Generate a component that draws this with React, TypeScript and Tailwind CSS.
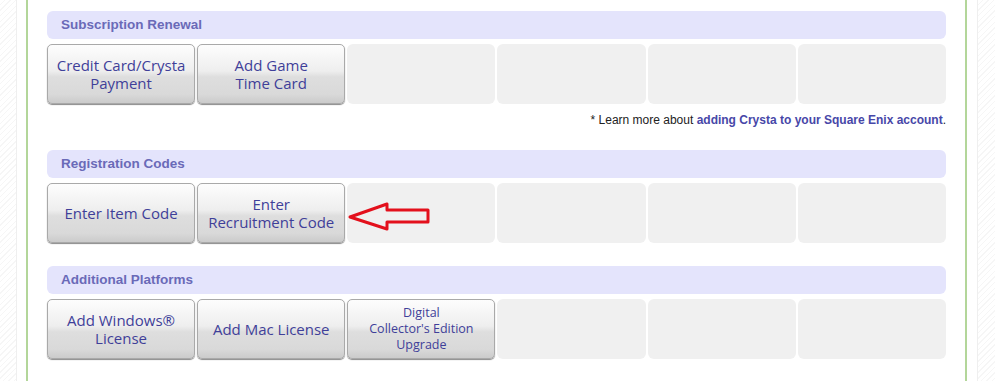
import { Fragment } from "react";

type Section = {
  title: string;
  buttons: Array<{ lines: string[]; small?: boolean }>;
  note?: boolean;
  arrow?: boolean;
};

const sections: Section[] = [
  {
    title: "Subscription Renewal",
    buttons: [
      { lines: ["Credit Card/Crysta", "Payment"] },
      { lines: ["Add Game", "Time Card"] },
    ],
    note: true,
  },
  {
    title: "Registration Codes",
    buttons: [
      { lines: ["Enter Item Code"] },
      { lines: ["Enter", "Recruitment Code"] },
    ],
    arrow: true,
  },
  {
    title: "Additional Platforms",
    buttons: [
      { lines: ["Add Windows®", "License"] },
      { lines: ["Add Mac License"] },
      { lines: ["Digital", "Collector's Edition", "Upgrade"], small: true },
    ],
  },
];

const stripes =
  "bg-[repeating-linear-gradient(135deg,#ffffff_0px,#ffffff_3px,#f6f6f6_3px,#f6f6f6_4px)]";

function RedArrow() {
  return (
    <svg
      className="absolute left-[300px] top-[17px]"
      width="86"
      height="34"
      viewBox="0 0 86 34"
    >
      <polygon
        points="3,17 40,4 40,10 81,10 81,22 40,22 40,29"
        fill="none"
        stroke="#e3101c"
        strokeWidth="3"
        strokeLinejoin="round"
      />
    </svg>
  );
}

export default function App() {
  return (
    <div className="flex h-[381px] w-[995px] bg-white font-['Liberation_Sans',Arial,sans-serif]">
      <div className={`w-[17px] border-r border-[#efefef] ${stripes}`} />
      <div className="w-[9px]" />
      <div className="flex w-[942px] flex-col border-x-2 border-[#b3d69a] px-[19px] pt-[11px]">
        {sections.map((s, si) => (
          <Fragment key={si}>
            <div className="flex h-[28px] shrink-0 items-center rounded-[6px] bg-[#e4e4fc] pl-[14px] text-[13.5px] font-bold text-[#6a6ab8]">
              {s.title}
            </div>
            <div className="relative mt-[5px] grid shrink-0 grid-cols-6 gap-[2px]">
              {Array.from({ length: 6 }).map((_, i) => {
                const b = s.buttons[i];
                if (!b)
                  return (
                    <div key={i} className="h-[60px] rounded-[6px] bg-[#f0f0f0]" />
                  );
                return (
                  <div
                    key={i}
                    className={`flex h-[60px] flex-col items-center justify-center rounded-[5px] border border-[#a9a9a9] bg-[linear-gradient(#fdfdfd_0%,#eeeeee_45%,#dedede_55%,#d9d9d9_85%,#cbcbcb_100%)] text-center font-['Open_Sans',sans-serif] text-[#3f3f99] shadow-[0_1px_1px_#8a8a8a] ${
                      b.small
                        ? "text-[12.5px] leading-[16px]"
                        : "text-[15px] leading-[18px]"
                    }`}
                  >
                    {b.lines.map((l) => (
                      <span key={l}>{l}</span>
                    ))}
                  </div>
                );
              })}
              {s.arrow && <RedArrow />}
            </div>
            {s.note ? (
              <p className="mt-[9px] mb-[23px] h-[14px] shrink-0 text-right text-[12px] leading-[14px] text-[#222]">
                * Learn more about{" "}
                <span className="font-bold text-[#4747a8]">
                  adding Crysta to your Square Enix account
                </span>
                .
              </p>
            ) : (
              <div className="h-[23px] shrink-0" />
            )}
          </Fragment>
        ))}
      </div>
      <div className="w-[10px]" />
      <div className={`w-[18px] border-l border-[#efefef] ${stripes}`} />
    </div>
  );
}
